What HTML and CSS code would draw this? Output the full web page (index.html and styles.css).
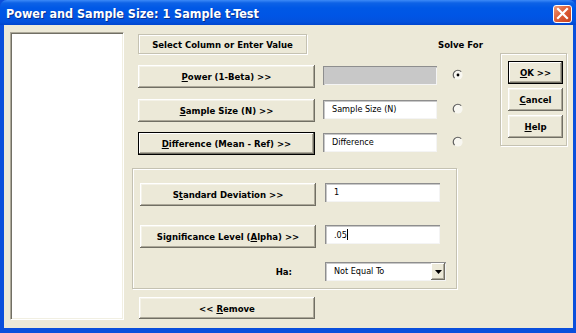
FILE: index.html
```html
<!DOCTYPE html>
<html>
<head>
<meta charset="utf-8">
<link rel="stylesheet" href="styles.css">
</head>
<body>
<div class="window">
  <div class="titlebar">
    <span class="title">Power and Sample Size: 1 Sample t-Test</span>
    <span class="close"><svg width="13" height="13" viewBox="0 0 13 13"><path d="M2 2 L11 11 M11 2 L2 11" stroke="#fff" stroke-width="2.2" stroke-linecap="square"/></svg></span>
  </div>
  <div class="body">
    <div class="listbox"></div>
    <div class="main">
      <div class="row head">
        <div class="selectbox">Select Column or Enter Value</div>
        <div class="solve">Solve For</div>
      </div>
      <div class="row r1">
        <div class="btn wide"><span><u>P</u>ower (1-Beta) &gt;&gt;</span></div>
        <div class="field disabled"></div>
        <span class="radio"><svg width="12" height="12" viewBox="0 0 12 12"><circle cx="6" cy="6" r="4.6" fill="#f8f7f1"/><path d="M2.6 9.2 A4.6 4.6 0 0 1 9.2 2.6" stroke="#5e5e5e" stroke-width="1.2" fill="none"/><circle cx="6" cy="6" r="1.4" fill="#000"/></svg></span>
      </div>
      <div class="row r2">
        <div class="btn wide"><span><u>S</u>ample Size (N) &gt;&gt;</span></div>
        <div class="field">Sample Size (N)</div>
        <span class="radio"><svg width="12" height="12" viewBox="0 0 12 12"><circle cx="6" cy="6" r="4.6" fill="#f8f7f1"/><path d="M2.6 9.2 A4.6 4.6 0 0 1 9.2 2.6" stroke="#5e5e5e" stroke-width="1.2" fill="none"/></svg></span>
      </div>
      <div class="row r3">
        <div class="btn wide default"><span><u>D</u>ifference (Mean - Ref) &gt;&gt;</span></div>
        <div class="field">Difference</div>
        <span class="radio"><svg width="12" height="12" viewBox="0 0 12 12"><circle cx="6" cy="6" r="4.6" fill="#f8f7f1"/><path d="M2.6 9.2 A4.6 4.6 0 0 1 9.2 2.6" stroke="#5e5e5e" stroke-width="1.2" fill="none"/></svg></span>
      </div>
      <div class="group">
        <div class="grow g1">
          <div class="btn gbtn"><span>S<u>t</u>andard Deviation &gt;&gt;</span></div>
          <div class="field gfield">1</div>
        </div>
        <div class="grow g2">
          <div class="btn gbtn"><span>Significance Level (<u>A</u>lpha) &gt;&gt;</span></div>
          <div class="field gfield">.05<span class="caret"></span></div>
        </div>
        <div class="grow g3">
          <div class="halabel">Ha:</div>
          <div class="combo">
            <span class="combotext">Not Equal To</span>
            <span class="dropbtn"><svg width="7" height="4" viewBox="0 0 7 4"><path d="M0 0 H7 L3.5 4 Z" fill="#000"/></svg></span>
          </div>
        </div>
      </div>
      <div class="btn wide remove"><span>&lt;&lt; <u>R</u>emove</span></div>
    </div>
    <div class="side">
      <div class="btn small default"><span><u>O</u>K &gt;&gt;</span></div>
      <div class="btn small"><span><u>C</u>ancel</span></div>
      <div class="btn small"><span><u>H</u>elp</span></div>
    </div>
  </div>
</div>
</body>
</html>
```

FILE: styles.css
```css
* { box-sizing: border-box; }
html, body { margin: 0; padding: 0; }
body {
  width: 576px;
  height: 333px;
  overflow: hidden;
  font-family: "DejaVu Sans Condensed", "Liberation Sans", sans-serif;
  font-size: 9.5px;
  color: #000;
  background: #fff;
}
.window {
  width: 576px;
  height: 333px;
  display: flex;
  flex-direction: column;
  background: #0a4fdc;
  padding: 0 3px 5px 4px;
}
.titlebar {
  height: 25px;
  margin: 0 -3px 0 -4px;
  display: flex;
  align-items: center;
  justify-content: space-between;
  padding: 0 4px 0 6px;
  background: linear-gradient(#3d8af7 0, #0d62e6 3px, #0058e6 8px, #0055e5 16px, #0351dc 22px, #0045cf 25px);
  border-radius: 7px 7px 0 0;
}
.title {
  color: #fff;
  font-family: "DejaVu Sans Condensed", "Liberation Sans", sans-serif;
  font-weight: bold;
  font-size: 12.5px;
  text-shadow: 1px 1px #0a2e8c;
  padding-top: 1px;
}
.close {
  width: 19px;
  height: 18px;
  margin-top: 2px;
  border: 1px solid #fff;
  border-radius: 3px;
  background: linear-gradient(135deg, #ec9a78 0%, #e0603a 45%, #c5401c 100%);
  display: flex;
  align-items: center;
  justify-content: center;
}
.body {
  flex: 1;
  background: #ece9d8;
  display: flex;
  align-items: flex-start;
}
.listbox {
  width: 114px;
  height: 288px;
  flex-shrink: 0;
  margin: 7px 0 0 6px;
  background: #fff;
  border-top: 1px solid #aca899;
  border-left: 1px solid #aca899;
  border-right: 1px solid #fff;
  border-bottom: 1px solid #fff;
  box-shadow: inset 1px 1px #716f64, inset -1px -1px #f1efe2;
}
.main {
  width: 340px;
  flex-shrink: 0;
  margin-left: 8px;
  display: flex;
  flex-direction: column;
}
.row {
  display: flex;
  align-items: flex-start;
  padding-left: 6px;
}
.row > *, .grow > * { flex-shrink: 0; }
.head { margin-top: 9px; align-items: center; }
.selectbox {
  width: 169px;
  height: 20px;
  display: flex;
  align-items: center;
  justify-content: center;
  font-weight: bold;
  border: 1px solid #c5c2b2;
  box-shadow: inset 1px 1px #fff, 1px 1px #fff;
}
.solve {
  margin-left: 131px;
  font-weight: bold;
  white-space: nowrap;
  margin-top: 1px;
}
.r1 { margin-top: 11px; }
.r2 { margin-top: 11px; }
.r3 { margin-top: 10px; }
.btn {
  height: 23px;
  display: flex;
  align-items: center;
  justify-content: center;
  font-weight: bold;
  white-space: pre;
  background: #ece9d8;
  box-shadow: inset -1px -1px #716f64, inset 1px 1px #fff, inset -2px -2px #aca899, inset 2px 2px #f4f2e8;
}
.btn.default {
  box-shadow: inset 0 0 0 1px #000, inset -2px -2px #716f64, inset 2px 2px #fff, inset -3px -3px #aca899;
}
.wide { width: 177px; }
.field {
  width: 114px;
  height: 19px;
  margin-left: 8px;
  margin-top: 1px;
  background: #fff;
  padding: 4px 0 0 9px;
  font-size: 9px;
  box-shadow: inset 1px 1px #8e8e8e, inset 2px 2px #c8c8c8, inset -1px -1px #f4f4f4;
}
.field.disabled { background: #c8c8c8; }
.radio {
  margin-left: 15px;
  margin-top: 4px;
  width: 12px;
  height: 12px;
  display: flex;
}
.group {
  width: 325px;
  margin-top: 13px;
  border: 1px solid #c5c2b2;
  box-shadow: inset 1px 1px #fff, 1px 1px #fff;
  padding: 14px 0 7px 7px;
  display: flex;
  flex-direction: column;
}
.grow {
  display: flex;
  align-items: flex-start;
}
.g2 { margin-top: 19px; }
.g3 { margin-top: 14px; align-items: center; }
.gbtn { width: 176px; }
.gfield { width: 115px; margin-left: 9px; margin-top: 0; }
.caret {
  display: inline-block;
  width: 1px;
  height: 11px;
  background: #000;
  vertical-align: -2px;
}
.halabel {
  width: 176px;
  text-align: right;
  padding-right: 24px;
  font-weight: bold;
}
.combo {
  width: 121px;
  height: 19px;
  margin-left: 9px;
  background: #fff;
  display: flex;
  align-items: center;
  justify-content: space-between;
  padding: 0 1px 0 9px;
  font-size: 9px;
  box-shadow: inset 1px 1px #8e8e8e, inset 2px 2px #c8c8c8, inset -1px -1px #f4f4f4;
}
.combotext { padding-bottom: 1px; }
.dropbtn {
  width: 14px;
  height: 17px;
  background: #ece9d8;
  display: flex;
  align-items: center;
  justify-content: center;
  box-shadow: inset -1px -1px #716f64, inset 1px 1px #fff, inset -2px -2px #aca899;
}
.remove { margin-top: 8px; margin-left: 7px; height: 22px; width: 176px; }
.side {
  width: 67px;
  height: 93px;
  flex-shrink: 0;
  margin-left: 28px;
  margin-top: 28px;
  border: 1px solid #c5c2b2;
  box-shadow: inset 1px 1px #fff, 1px 1px #fff;
  padding: 7px 0 0 7px;
  display: flex;
  flex-direction: column;
  gap: 4px;
}
.small { width: 55px; }
```
